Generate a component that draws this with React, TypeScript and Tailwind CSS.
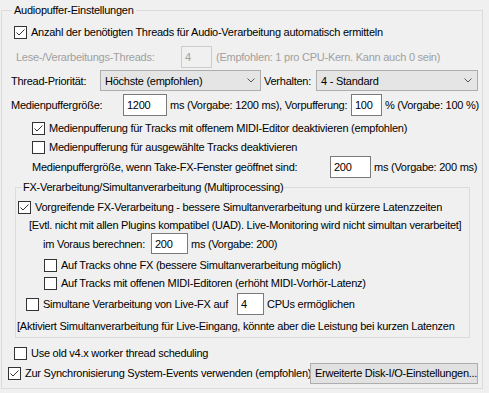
import type { ReactNode } from "react"

function Check({ checked = false }: { checked?: boolean }) {
  return (
    <span className="flex h-[13px] w-[13px] shrink-0 items-center justify-center border border-[#333333] bg-white">
      {checked && (
        <svg width="11" height="11" viewBox="0 0 11 11">
          <polyline points="1.5,5.5 4,8 9.5,2.5" fill="none" stroke="#333333" strokeWidth="1" />
        </svg>
      )}
    </span>
  )
}

function Edit({ value, w, h = "h-[22px]", disabled = false }: { value: string; w: string; h?: string; disabled?: boolean }) {
  return (
    <span
      className={`flex shrink-0 items-center border pl-[3px] ${w} ${h} ${
        disabled ? "border-[#cccccc] bg-[#f0f0f0] text-[#a0a0a0]" : "border-[#7a7a7a] bg-white text-black"
      }`}
    >
      {value}
    </span>
  )
}

function Combo({ value, w }: { value: string; w: string }) {
  return (
    <span className={`flex h-[21px] shrink-0 items-center justify-between border border-[#adadad] bg-[#e5e5e5] pl-[4px] pr-[5px] ${w}`}>
      <span>{value}</span>
      <svg width="8" height="5" viewBox="0 0 8 5">
        <polyline points="0.5,0.5 4,4 7.5,0.5" fill="none" stroke="#555555" strokeWidth="1" />
      </svg>
    </span>
  )
}

function CheckRow({ checked, children, className }: { checked?: boolean; children: ReactNode; className: string }) {
  return (
    <div className={`flex h-[18px] items-center gap-[4px] whitespace-nowrap ${className}`}>
      <Check checked={checked} />
      <span>{children}</span>
    </div>
  )
}

export default function App() {
  return (
    <div className="h-[393px] w-[489px] overflow-hidden bg-[#f0f0f0] pl-[1px] pt-[2px] font-['Liberation_Sans',Arial,sans-serif] text-[11px] leading-[14px] tracking-[-0.25px] text-black">
      <fieldset className="w-[482px] border border-[#dcdcdc] pb-[4px]">
        <legend className="ml-[10px] px-[2px] leading-[16px]">Audiopuffer-Einstellungen</legend>

        <CheckRow checked className="mt-[5px] pl-[12px]">
          Anzahl der benötigten Threads für Audio-Verarbeitung automatisch ermitteln
        </CheckRow>

        <div className="mt-[5px] flex h-[22px] items-center whitespace-nowrap">
          <span className="w-[179px] pl-[14px] text-[#a0a0a0]">Lese-/Verarbeitungs-Threads:</span>
          <Edit value="4" w="w-[31px]" disabled />
          <span className="pl-[4px] text-[#a0a0a0]">(Empfohlen: 1 pro CPU-Kern. Kann auch 0 sein)</span>
        </div>

        <div className="mt-[2px] flex h-[21px] items-center whitespace-nowrap">
          <span className="w-[98px] pl-[9px]">Thread-Priorität:</span>
          <Combo value="Höchste (empfohlen)" w="w-[161px]" />
          <span className="w-[55px] pl-[3px]">Verhalten:</span>
          <Combo value="4 - Standard" w="w-[162px]" />
        </div>

        <div className="mt-[3px] flex h-[22px] items-center whitespace-nowrap">
          <span className="w-[121px] pl-[9px]">Medienpuffergröße:</span>
          <Edit value="1200" w="w-[44px]" />
          <span className="w-[184px] pl-[3px]">ms (Vorgabe: 1200 ms), Vorpufferung:</span>
          <Edit value="100" w="w-[31px]" />
          <span className="pl-[3px]">% (Vorgabe: 100 %)</span>
        </div>

        <CheckRow checked className="mt-[3px] pl-[30px]">
          Medienpufferung für Tracks mit offenem MIDI-Editor deaktivieren (empfohlen)
        </CheckRow>
        <CheckRow className="mt-[1px] pl-[30px]">Medienpufferung für ausgewählte Tracks deaktivieren</CheckRow>

        <div className="flex h-[22px] items-center whitespace-nowrap">
          <span className="w-[328px] pl-[30px]">Medienpuffergröße, wenn Take-FX-Fenster geöffnet sind:</span>
          <Edit value="200" w="w-[41px]" />
          <span className="pl-[3px]">ms (Vorgabe: 200 ms)</span>
        </div>

        <fieldset className="ml-[13px] mt-[1px] w-[455px] border border-[#dcdcdc] pb-[3px]">
          <legend className="ml-[6px] px-[1px] leading-[16px]">FX-Verarbeitung/Simultanverarbeitung (Multiprocessing)</legend>

          <CheckRow checked className="mt-[3px] pl-[2px]">
            Vorgreifende FX-Verarbeitung - bessere Simultanverarbeitung und kürzere Latenzzeiten
          </CheckRow>
          <div className="mt-[2px] h-[15px] whitespace-nowrap pl-[13px] leading-[15px]">
            [Evtl. nicht mit allen Plugins kompatibel (UAD). Live-Monitoring wird nicht simultan verarbeitet]
          </div>

          <div className="flex h-[21px] items-center whitespace-nowrap">
            <span className="w-[135px] pl-[27px]">im Voraus berechnen:</span>
            <Edit value="200" w="w-[37px]" h="h-[21px]" />
            <span className="pl-[3px]">ms (Vorgabe: 200)</span>
          </div>

          <CheckRow className="mt-[2px] pl-[28px]">Auf Tracks ohne FX (bessere Simultanverarbeitung möglich)</CheckRow>
          <CheckRow className="pl-[28px]">Auf Tracks mit offenen MIDI-Editoren (erhöht MIDI-Vorhör-Latenz)</CheckRow>

          <div className="mt-[1px] flex h-[22px] items-center whitespace-nowrap">
            <span className="flex w-[221px] items-center gap-[4px] pl-[10px]">
              <Check />
              <span>Simultane Verarbeitung von Live-FX auf</span>
            </span>
            <Edit value="4" w="w-[27px]" />
            <span className="pl-[3px]">CPUs ermöglichen</span>
          </div>

          <div className="mt-[3px] h-[16px] overflow-hidden whitespace-nowrap pl-[1px] leading-[16px]">
            [Aktiviert Simultanverarbeitung für Live-Eingang, könnte aber die Leistung bei kurzen Latenzen
          </div>
        </fieldset>

        <CheckRow className="mt-[6px] pl-[12px]">Use old v4.x worker thread scheduling</CheckRow>

        <div className="flex h-[22px] items-center whitespace-nowrap">
          <span className="flex w-[308px] items-center gap-[4px] overflow-hidden pl-[6px]">
            <Check checked />
            <span>Zur Synchronisierung System-Events verwenden (empfohlen)</span>
          </span>
          <span className="flex h-[21px] w-[168px] items-center border border-[#adadad] bg-[#e1e1e1] pl-[4px]">
            Erweiterte Disk-I/O-Einstellungen...
          </span>
        </div>
      </fieldset>
    </div>
  )
}
